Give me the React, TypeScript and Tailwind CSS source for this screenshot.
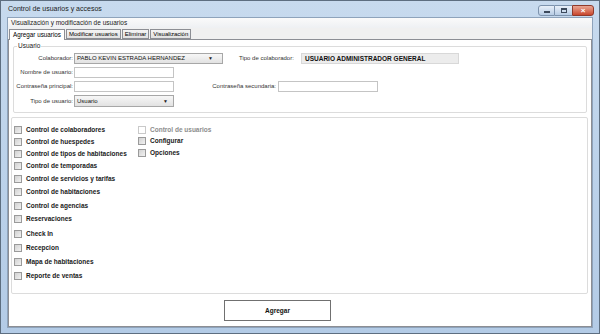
import React from 'react';

const font = { fontFamily: '"Liberation Sans", Arial, sans-serif' };

function Checkbox({ label, disabled, h }: { label: string; disabled?: boolean; h: string }) {
  return (
    <div className={`flex items-center gap-[4px] ${h}`}>
      <span
        className={
          disabled
            ? 'h-[8px] w-[8px] border border-[#c9c9c9] bg-white'
            : 'h-[8px] w-[8px] border border-[#9a9a9a] bg-gradient-to-br from-[#d2d2d2] to-[#f2f2f2]'
        }
      />
      <span className={`text-[6.5px] font-bold ${disabled ? 'text-[#8d8d8d]' : 'text-[#1a1a1a]'}`}>{label}</span>
    </div>
  );
}

function Arrow() {
  return <span className="text-[5px] text-[#222]">▼</span>;
}

const left = [
  ['Control de colaboradores', 'h-[12px]'],
  ['Control de huespedes', 'h-[12px]'],
  ['Control de tipos de habitaciones', 'h-[12px]'],
  ['Control de temporadas', 'h-[12px]'],
  ['Control de servicios y tarifas', 'h-[13px]'],
  ['Control de habitaciones', 'h-[14px]'],
  ['Control de agencias', 'h-[13px]'],
  ['Reservaciones', 'h-[14px]'],
  ['Check In', 'h-[15px]'],
  ['Recepcion', 'h-[14px]'],
  ['Mapa de habitaciones', 'h-[14px]'],
  ['Reporte de ventas', 'h-[13px]'],
];

const tab = 'flex h-[10px] items-center border border-[#8c8e94] bg-gradient-to-b from-[#f4f4f4] to-[#e1e1e1] px-[2px]';

export default function App() {
  return (
    <div
      style={font}
      className="flex h-[334px] w-[600px] flex-col border border-[#5d6e80] bg-gradient-to-b from-[#c7daee] via-[#bcd2ea] to-[#b3cbe6] text-[#000]"
    >
      {/* title bar */}
      <div className="flex h-[16px] shrink-0 items-center justify-between pl-[7px] pr-[5px]">
        <span className="text-[7px] text-[#1b1b1b]">Control de usuarios y accesos</span>
        <div className="flex items-start self-start pt-[4px]">
          <div className="flex h-[11px] w-[17px] items-center justify-center rounded-l-[3px] border border-[#7d93ad] bg-gradient-to-b from-[#e8f0f9] to-[#b7cce4]">
            <span className="mt-[3px] h-[2px] w-[6px] bg-[#3c4a5c]" />
          </div>
          <div className="flex h-[11px] w-[17px] items-center justify-center border-y border-[#7d93ad] bg-gradient-to-b from-[#e8f0f9] to-[#b7cce4]">
            <span className="h-[5px] w-[6px] border border-t-2 border-[#3c4a5c]" />
          </div>
          <div className="flex h-[11px] w-[22px] items-center justify-center rounded-r-[3px] border border-[#8f3a2c] bg-gradient-to-b from-[#e8a593] to-[#c8452c] text-[8px] font-bold leading-none text-white">
            ×
          </div>
        </div>
      </div>

      {/* client area */}
      <div className="mx-[6px] mb-[5px] flex flex-1 flex-col border border-[#8ea3bb] bg-[#f0f0f0]">
        <div className="flex h-[10px] shrink-0 items-center bg-gradient-to-b from-[#fafafa] to-[#eef0f3] px-[3px] text-[6.5px] text-[#222]">
          Visualización y modificación de usuarios
        </div>

        {/* tabs */}
        <div className="flex h-[11px] shrink-0 items-end gap-[1px] pl-[1px] text-[6px]">
          <div className="relative z-10 -mb-px flex h-[11px] items-center border border-b-0 border-[#8c8e94] bg-white px-[3px] text-[6.3px]">
            Agregar usuarios
          </div>
          <div className={tab}>Modificar usuarios</div>
          <div className={tab}>Eliminar</div>
          <div className={tab}>Visualización</div>
        </div>

        {/* tab page */}
        <div className="flex flex-1 flex-col border border-[#8c8e94] bg-white px-[3px] pb-[3px]">
          {/* groupbox Usuario */}
          <div className="relative mx-[1px] mt-[6px] h-[67px] shrink-0 rounded-[2px] border border-[#dcdcdc]">
            <span className="absolute -top-[5px] left-[3px] bg-white px-[1px] text-[6.5px] leading-[8px] text-[#222]">
              Usuario
            </span>
            <div className="flex pt-[6px] text-[6px] text-[#333]">
              <div className="flex w-[223px] flex-col gap-[3px]">
                <div className="flex h-[11px] items-center">
                  <span className="w-[59px] text-right">Colaborador:</span>
                  <div className="ml-px flex h-[11px] w-[149px] items-center justify-between border border-[#a7a7a7] bg-gradient-to-b from-[#f7f7f7] to-[#e2e2e2] px-[2px]">
                    <span className="text-[6px] text-[#111]">PABLO KEVIN ESTRADA HERNANDEZ</span>
                    <span className="mr-[7px]"><Arrow /></span>
                  </div>
                </div>
                <div className="flex h-[11px] items-center">
                  <span className="w-[59px] text-right">Nombre de usuario:</span>
                  <div className="ml-px h-[11px] w-[100px] border border-[#c4c4c4] bg-white" />
                </div>
                <div className="flex h-[11px] items-center">
                  <span className="w-[59px] text-right">Contraseña principal:</span>
                  <div className="ml-px h-[11px] w-[100px] border border-[#c4c4c4] bg-white" />
                </div>
                <div className="flex h-[12px] items-center">
                  <span className="w-[59px] text-right">Tipo de usuario:</span>
                  <div className="ml-px flex h-[12px] w-[100px] items-center justify-between border border-[#a7a7a7] bg-gradient-to-b from-[#f7f7f7] to-[#e2e2e2] px-[2px]">
                    <span className="text-[6px] text-[#111]">Usuario</span>
                    <span className="mr-[3px]"><Arrow /></span>
                  </div>
                </div>
              </div>
              <div className="flex flex-col">
                <div className="flex h-[11px] items-center">
                  <span className="w-[63px] pl-[2px] text-[#333]">Tipo de colaborador:</span>
                  <div className="ml-px flex h-[11px] w-[158px] items-center border border-[#d8d8d8] bg-[#ececec] px-[3px] text-[6.5px] font-bold text-[#111]">
                    USUARIO ADMINISTRADOR GENERAL
                  </div>
                </div>
                <div className="-ml-[25px] mt-[17px] flex h-[11px] items-center">
                  <span className="w-[64px] text-right">Contraseña secundaria:</span>
                  <div className="ml-[2px] h-[11px] w-[100px] border border-[#c4c4c4] bg-white" />
                </div>
              </div>
            </div>
          </div>

          {/* groupbox permisos */}
          <div className="-ml-[1px] mt-[4px] flex h-[177px] shrink-0 rounded-[2px] border border-[#dcdcdc] pl-[2px] pt-[6px]">
            <div className="flex w-[124px] flex-col">
              {left.map(([l, h]) => (
                <Checkbox key={l} label={l} h={h} />
              ))}
            </div>
            <div className="flex flex-col">
              <Checkbox label="Control de usuarios" disabled h="h-[11px]" />
              <Checkbox label="Configurar" h="h-[11px]" />
              <Checkbox label="Opciones" h="h-[13px]" />
            </div>
          </div>

          {/* button */}
          <div className="flex flex-1 items-center justify-center pt-[4px]">
            <div className="ml-[-45px] flex h-[21px] w-[107px] items-center justify-center border border-[#707070] bg-white text-[6.5px] font-bold text-[#111]">
              Agregar
            </div>
          </div>
        </div>
      </div>
    </div>
  );
}
